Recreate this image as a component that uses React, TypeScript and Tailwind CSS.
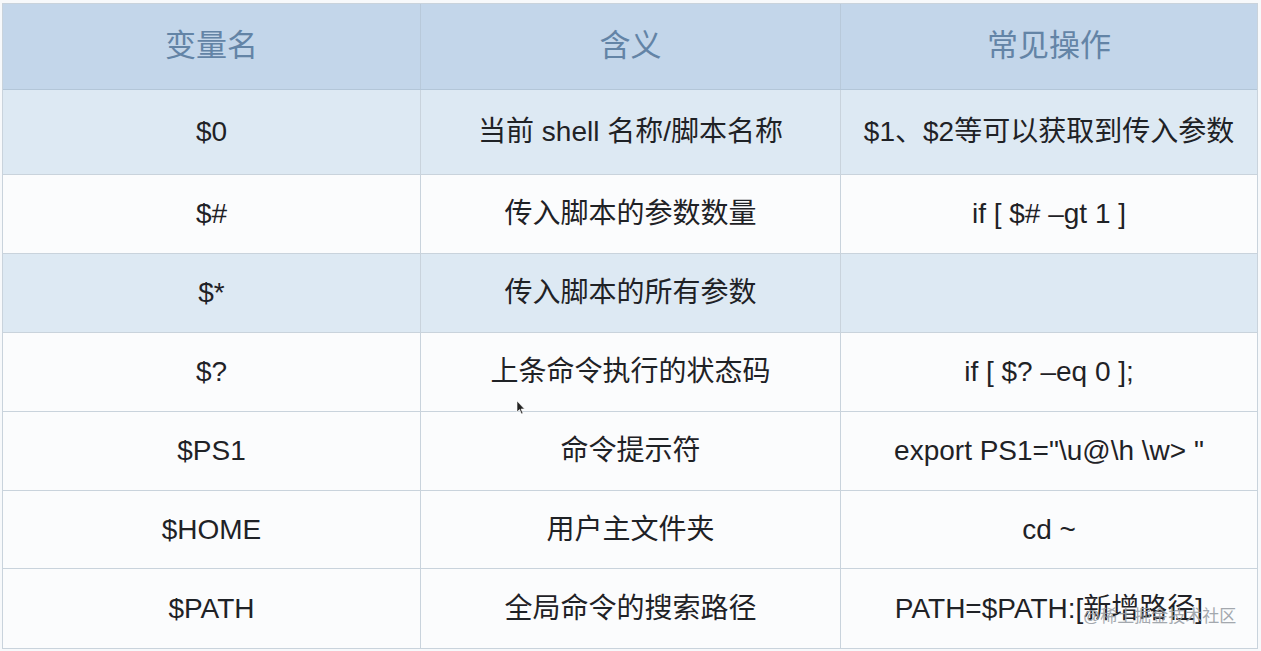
import React from "react";

const rows: { a: string; b: string; c: string; blue: boolean; h: string }[] = [
  { a: "$0", b: "当前 shell 名称/脚本名称", c: "$1、$2等可以获取到传入参数", blue: true, h: "h-[85px]" },
  { a: "$#", b: "传入脚本的参数数量", c: "if [ $# –gt 1 ]", blue: false, h: "h-[79px]" },
  { a: "$*", b: "传入脚本的所有参数", c: "", blue: true, h: "h-[79px]" },
  { a: "$?", b: "上条命令执行的状态码", c: "if [ $? –eq 0 ];", blue: false, h: "h-[79px]" },
  { a: "$PS1", b: "命令提示符", c: 'export PS1="\\u@\\h \\w> "', blue: false, h: "h-[79px]" },
  { a: "$HOME", b: "用户主文件夹", c: "cd ~", blue: false, h: "h-[78px]" },
  { a: "$PATH", b: "全局命令的搜索路径", c: "PATH=$PATH:[新增路径]", blue: false, h: "h-[79px]" },
];

const font = { fontFamily: '"Liberation Sans", "Noto Sans CJK SC", sans-serif' };

export default function App() {
  return (
    <div className="w-[1261px] h-[651px] bg-[#f7f9fb] pt-[3px] pl-[2px] relative overflow-hidden" style={font}>
      <div className="w-[1256px] border border-[#c9d3dc] bg-white">
        <div className="grid grid-cols-[418px_420px_1fr] h-[86px] bg-[#c3d6ea] border-b border-[#b3c6d8]">
          <div className="flex items-center justify-center text-[31px] text-[#6384a6] border-r border-[#b8c9da]">变量名</div>
          <div className="flex items-center justify-center text-[31px] text-[#6384a6] border-r border-[#b8c9da]">含义</div>
          <div className="flex items-center justify-center text-[31px] text-[#6384a6]">常见操作</div>
        </div>
        {rows.map((r, i) => (
          <div
            key={i}
            className={`grid grid-cols-[418px_420px_1fr] ${r.h} ${r.blue ? "bg-[#dde9f3]" : "bg-[#fbfcfd]"} ${i < rows.length - 1 ? "border-b border-[#c9d3dc]" : ""}`}
          >
            <div className="flex items-center justify-center text-[28px] text-[#1f2226] border-r border-[#c9d3dc]">{r.a}</div>
            <div className="flex items-center justify-center text-[28px] text-[#1f2226] border-r border-[#c9d3dc]">{r.b}</div>
            <div className="flex items-center justify-center text-[28px] text-[#1f2226] whitespace-nowrap">{r.c}</div>
          </div>
        ))}
      </div>
      <div className="absolute left-[1083px] top-[606px] text-[17px] leading-[22px] text-[#9aa0a6] opacity-90 whitespace-nowrap">@稀土掘金技术社区</div>
      <svg className="absolute left-[516px] top-[400px]" width="10" height="16" viewBox="0 0 10 16">
        <path d="M1 1 L1 12 L3.5 9.5 L5.5 14 L7 13.3 L5 9 L8.5 9 Z" fill="#222" stroke="#fff" strokeWidth="0.6" />
      </svg>
    </div>
  );
}
